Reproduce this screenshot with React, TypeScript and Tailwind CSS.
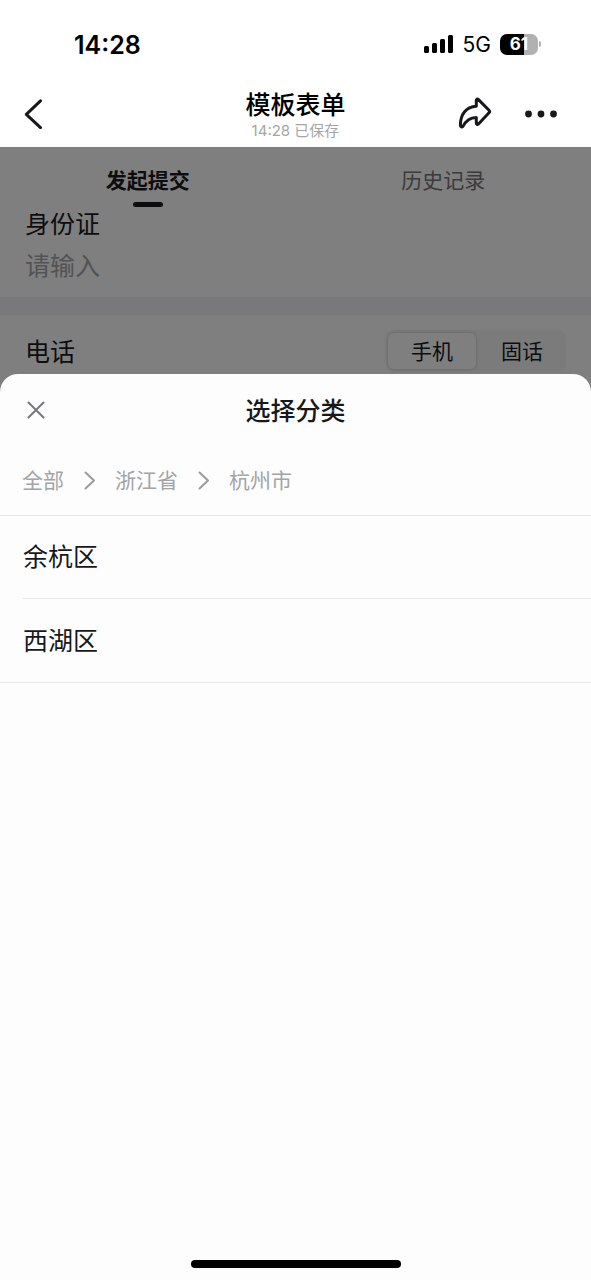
import { useState } from "react";
import clsx from "clsx";

const districts = ["余杭区", "西湖区"];
const crumbs = ["全部", "浙江省", "杭州市"];

const StatusBar = () => {
  return (
    <div className="flex h-[88px] items-center justify-between pr-[50px] pl-[74px]">
      <span className="pt-px text-[25px] leading-8 font-semibold text-black">14:28</span>
      <div className="flex items-center">
        <svg width="30" height="20" viewBox="0 0 30 20" aria-hidden="true">
          <rect x="0" y="12" width="5" height="7" rx="1.5" />
          <rect x="8" y="9" width="5" height="10" rx="1.5" />
          <rect x="16" y="5" width="5" height="14" rx="1.5" />
          <rect x="24" y="1" width="5" height="18" rx="1.5" />
        </svg>
        <span className="ml-[9px] pt-0.5 text-[21px] leading-8 text-black">5G</span>
        <div className="ml-[9px] flex items-center">
          <div className="flex h-[21px] w-[38px] items-center justify-center rounded-[7px] bg-linear-to-r from-black from-62% to-[#b1b1b1] to-62% text-[17px] leading-5 font-bold text-white">
            61
          </div>
          <div className="ml-px h-[6px] w-[2px] rounded-r-full bg-[#b1b1b1]" />
        </div>
      </div>
    </div>
  );
};

const NavBar = () => {
  return (
    <div className="grid h-[59px] grid-cols-3 items-start px-6">
      <button type="button" aria-label="返回" className="mt-[11px] w-5">
        <svg width="20" height="30" viewBox="0 0 20 30" fill="none" stroke="#16181c" strokeWidth="3" strokeLinecap="round" strokeLinejoin="round">
          <path d="M16.5 1.8 2.3 15.3 16.5 28.6" />
        </svg>
      </button>
      <div className="pt-px text-center">
        <h1 className="text-[25px] leading-8 font-medium text-black">模板表单</h1>
        <p className="text-[15px] leading-5 text-[#a5a6a8]">14:28 已保存</p>
      </div>
      <div className="mt-[9px] flex justify-end gap-[33px] pr-[9px]">
        <button type="button" aria-label="分享">
          <svg width="34" height="32" viewBox="0 0 34 32" fill="none" stroke="#16181c" strokeWidth="3" strokeLinecap="round" strokeLinejoin="round">
            <path d="M18.3 3.6c0-1.6 1.2-2 2.2-1L31 13.2c.9.9.9 1.7 0 2.6L20.5 27c-1 1-2.200.6-2.200-1v-5.600c-6.300.2-10.300 3-13.200 8.800-.6 1.200-2.700.9-2.700-.6C2.200 17.500 8 9.800 18.300 9.200z" />
          </svg>
        </button>
        <button type="button" aria-label="更多">
          <svg width="33" height="32" viewBox="0 0 33 32" fill="#16181c">
            <circle cx="3.5" cy="17" r="3.4" />
            <circle cx="16" cy="17" r="3.4" />
            <circle cx="28.5" cy="17" r="3.4" />
          </svg>
        </button>
      </div>
    </div>
  );
};

const FormPage = () => {
  const [phoneType, setPhoneType] = useState("手机");

  return (
    <div className="relative bg-white pb-5 text-[#1a1b1f]">
      <div className="grid h-[66px] grid-cols-2">
        <button type="button" className="flex flex-col items-center pt-[18px] text-[21px] leading-8 font-bold">
          发起提交
          <span className="mt-[5px] h-[5px] w-[30px] rounded-full bg-[#1a1b1f]" />
        </button>
        <button type="button" className="flex flex-col items-center pt-[18px] text-[21px] leading-8 text-[#75767a]">
          历史记录
        </button>
      </div>

      {/* the first field is scrolled a little way under the tabs */}
      <div className="overflow-hidden">
        <div className="-mt-[7px] flex flex-col px-[25px] pb-[13px] text-[25px] leading-9">
          <label htmlFor="idCard">身份证</label>
          <input
            id="idCard"
            type="text"
            placeholder="请输入"
            className="mt-[6px] h-9 w-full outline-none placeholder:text-[#a5a6aa]"
          />
        </div>
        <div className="h-[18px] bg-[#f2f3f6]" />
        <div className="flex h-[72px] items-center justify-between px-[25px]">
          <span className="pt-0.5 text-[25px] leading-9">电话</span>
          <div className="flex gap-[2px] rounded-lg bg-[#f7f7f8] py-[3px] pl-[2px]">
            {["手机", "固话"].map((type) => (
              <button
                key={type}
                type="button"
                onClick={() => setPhoneType(type)}
                className={clsx(
                  "h-9 w-[88px] rounded-md pt-0.5 text-[21px] leading-8",
                  phoneType === type && "bg-white shadow-[0_0_4px_rgba(0,0,0,0.2)]"
                )}
              >
                {type}
              </button>
            ))}
          </div>
        </div>
      </div>

      <div className="absolute inset-0 bg-black/50" />
    </div>
  );
};

const CategorySheet = () => {
  return (
    <section
      role="dialog"
      aria-label="选择分类"
      className="relative -mt-[33px] flex flex-1 flex-col rounded-t-[18px] bg-[#fdfdfd] text-[#16181c]"
    >
      <div className="grid h-[72px] grid-cols-3 items-center px-[27px]">
        <button type="button" aria-label="关闭" className="w-[18px]">
          <svg width="18" height="18" viewBox="0 0 18 18" fill="none" stroke="#77787b" strokeWidth="2" strokeLinecap="round">
            <path d="M1.5 1.5 16.5 16.5M16.5 1.5 1.5 16.5" />
          </svg>
        </button>
        <h2 className="pt-0.5 text-center text-[25px] leading-9 font-medium">选择分类</h2>
      </div>

      <nav className="flex h-[70px] items-center border-b border-[#e6e6e8] px-[22px] text-[21px] leading-8 text-[#a3a4a7]">
        {crumbs.map((crumb, index) => (
          <div key={crumb} className="flex items-center">
            {index > 0 && (
              <svg className="mr-[19px] ml-5" width="12" height="20" viewBox="0 0 12 20" fill="none" stroke="#9a9b9e" strokeWidth="2" strokeLinecap="round" strokeLinejoin="round">
                <path d="M1.5 1.5 10 9.5 1.5 17.5" />
              </svg>
            )}
            <button type="button">{crumb}</button>
          </div>
        ))}
      </nav>

      <ul className="border-b border-[#e6e6e8] pl-[23px]">
        {districts.map((district, index) => (
          <li key={district} className={clsx(index > 0 && "border-t border-[#e6e6e8]")}>
            <button
              type="button"
              className={clsx(
                "block w-full text-left text-[25px] leading-9",
                index > 0 ? "h-[83px]" : "h-[82px]"
              )}
            >
              {district}
            </button>
          </li>
        ))}
      </ul>

      <div className="mx-auto mt-auto mb-3 h-2 w-[210px] rounded-full bg-black" />
    </section>
  );
};

export default function App() {
  return (
    <div className="flex min-h-screen flex-col bg-white font-['Inter','Noto_Sans_CJK_SC',sans-serif]">
      <header>
        <StatusBar />
        <NavBar />
      </header>
      <main className="flex flex-1 flex-col">
        <FormPage />
        <CategorySheet />
      </main>
    </div>
  );
}
